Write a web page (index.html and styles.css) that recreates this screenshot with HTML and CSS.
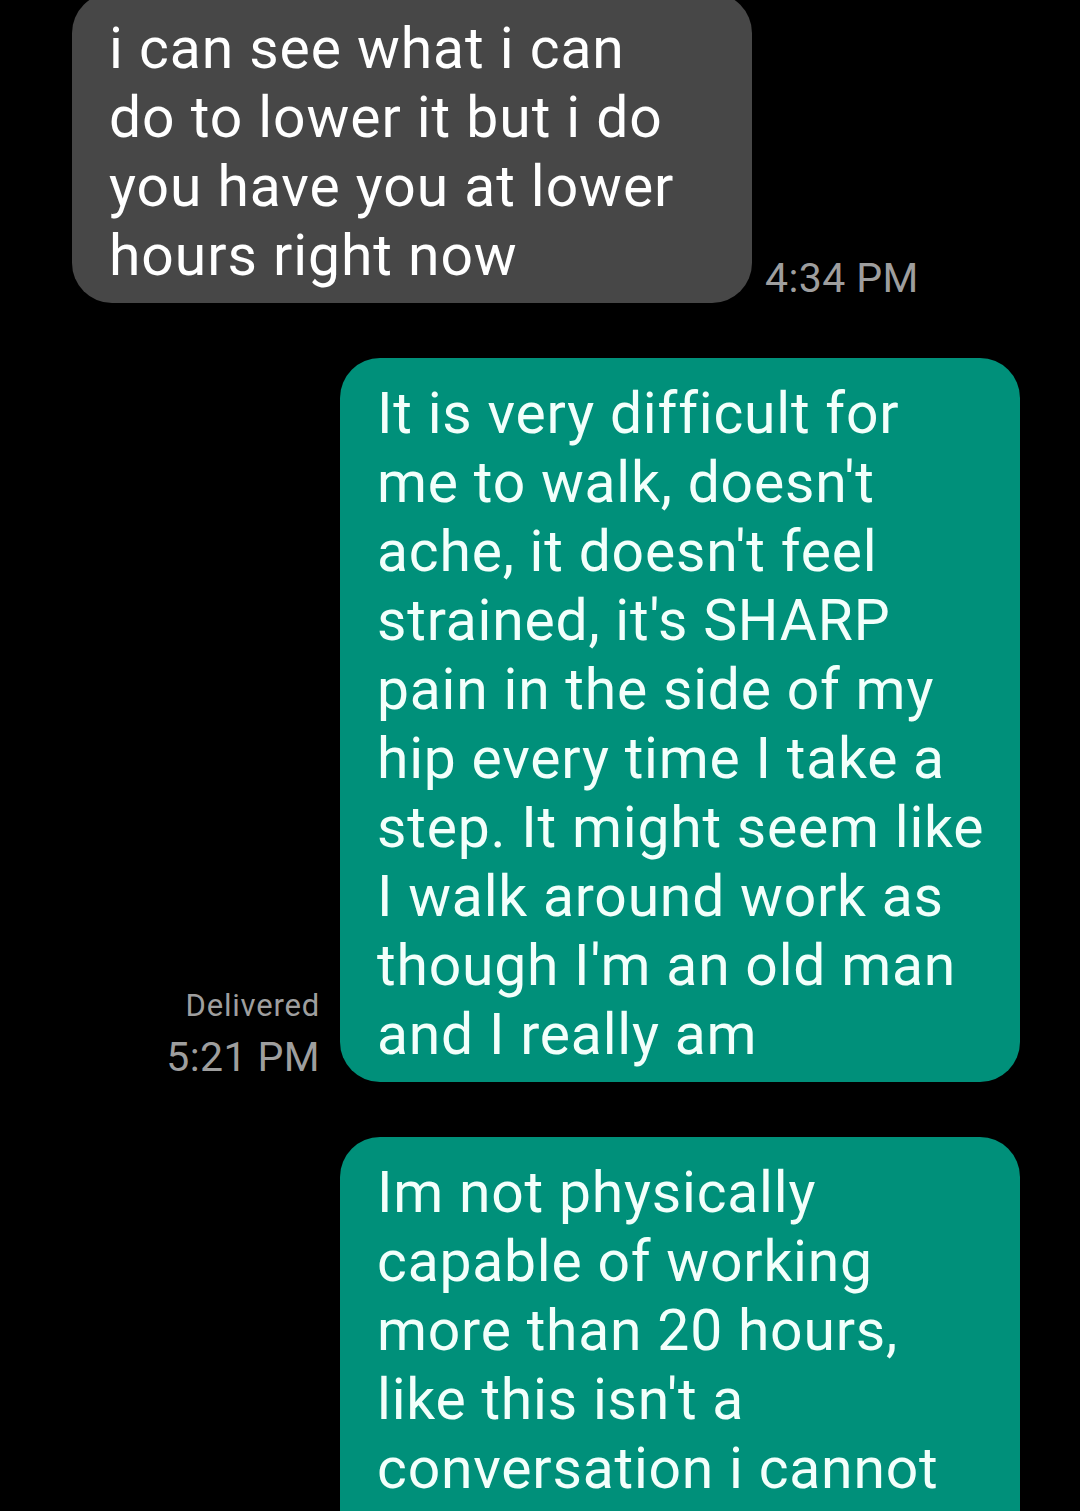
FILE: index.html
```html
<!DOCTYPE html>
<html>
<head>
<meta charset="utf-8">
<link rel="stylesheet" href="styles.css">
</head>
<body>
<div class="thread">
  <div class="row incoming first">
    <div class="bubble grey">i can see what i can<br>do to lower it but i do<br>you have you at lower<br>hours right now</div>
    <div class="meta meta-in"><span class="time">4:34 PM</span></div>
  </div>
  <div class="row outgoing">
    <div class="meta meta-out"><span class="status">Delivered</span><span class="time">5:21 PM</span></div>
    <div class="bubble green">It is very difficult for<br>me to walk, doesn't<br>ache, it doesn't feel<br>strained, it's SHARP<br>pain in the side of my<br>hip every time I take a<br>step. It might seem like<br>I walk around work as<br>though I'm an old man<br>and I really am</div>
  </div>
  <div class="row outgoing">
    <div class="bubble green tail">Im not physically<br>capable of working<br>more than 20 hours,<br>like this isn't a<br>conversation i cannot</div>
  </div>
</div>
</body>
</html>
```
FILE: styles.css
```css
html, body {
  margin: 0;
  padding: 0;
  background: #000;
  height: 1511px;
  overflow: hidden;
}
.thread {
  display: flex;
  flex-direction: column;
  gap: 55px;
  font-family: Roboto, "Noto Sans", sans-serif;
}
.row {
  display: flex;
  align-items: flex-end;
}
.row.first {
  margin-top: -7px;
}
.incoming {
  padding-left: 72px;
}
.outgoing {
  justify-content: flex-end;
  padding-right: 60px;
}
.bubble {
  width: 680px;
  box-sizing: border-box;
  padding: 21px 20px 13px 37px;
  border-radius: 40px;
  font-size: 57px;
  line-height: 69px;
  letter-spacing: 0.8px;
  white-space: nowrap;
  color: #ffffff;
}
.grey {
  background: #474747;
  letter-spacing: 0.95px;
}
.green {
  background: #00907a;
  color: #f2fffb;
}
.tail {
  padding-bottom: 60px;
}
.meta {
  display: flex;
  flex-direction: column;
  color: #9e9e9e;
  margin-bottom: 1px;
}
.meta-in {
  margin-left: 13px;
}
.meta-out {
  align-items: flex-end;
  margin-right: 20px;
}
.time {
  font-size: 41px;
  line-height: 48px;
  letter-spacing: 0.4px;
}
.status {
  font-size: 31px;
  line-height: 38px;
  letter-spacing: 0.8px;
  margin-bottom: 8px;
}
```
